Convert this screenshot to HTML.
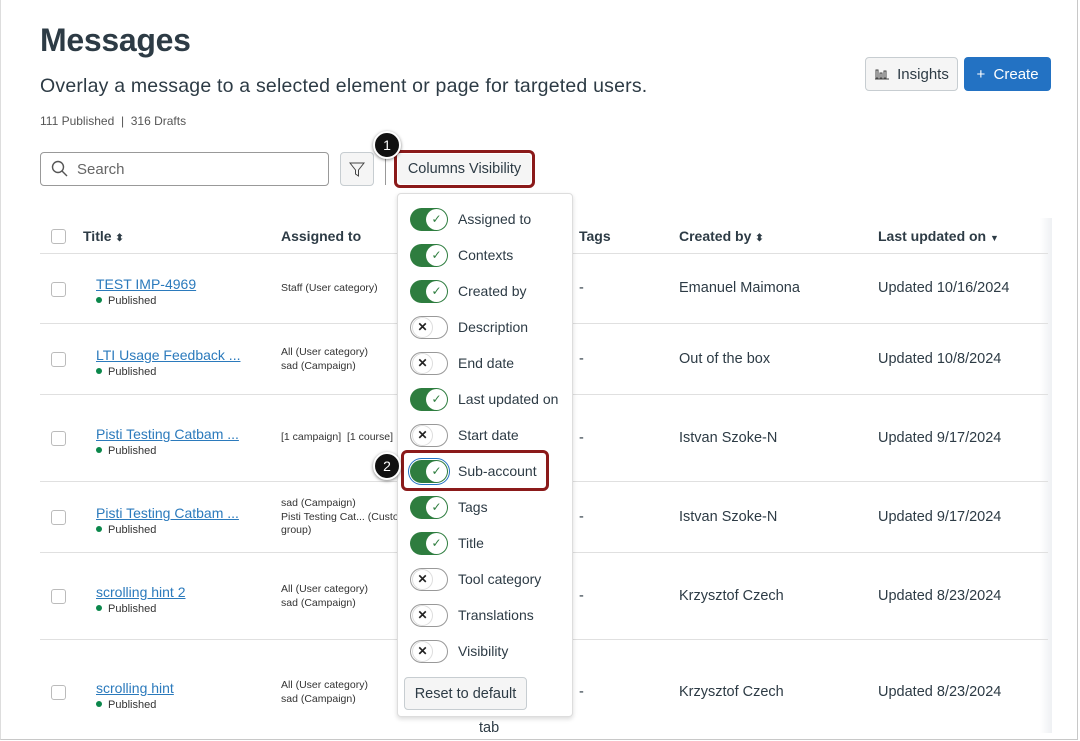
<!DOCTYPE html><html><head><style>
*{box-sizing:border-box;margin:0;padding:0}
body{width:1080px;height:741px;overflow:hidden;background:#fff;font-family:"Liberation Sans",sans-serif;color:#273540;position:relative}
.a{position:absolute}
.frame{left:0;top:0;width:1078px;height:740px;border:1px solid #c8c8c8;border-top:none;border-left:1px solid #ddd}
h1{position:absolute;left:40px;top:22px;font-size:32px;font-weight:bold;color:#2d3b45;letter-spacing:-0.3px}
.sub{left:40px;top:75px;font-size:19.5px;color:#2d3b45;letter-spacing:0.2px}
.cnt{left:40px;top:114px;font-size:12px;color:#555}
.btn{border:1px solid #c7cdd1;background:#f5f5f5;border-radius:4px;font-size:15px;color:#2d3b45;display:flex;align-items:center;justify-content:center}
.line{left:40px;width:1008px;height:1px;background:#e0e0e0}
.cb{left:51px;width:15px;height:15px;border:1px solid #bbb;border-radius:3px;background:#fff}
.lnk{left:96px;font-size:14px;color:#2b7abc;text-decoration:underline}
.pub{left:96px;font-size:11px;color:#333}
.pub:before{content:"";display:inline-block;width:6px;height:6px;border-radius:50%;background:#0b874b;margin-right:6px;vertical-align:1px}
.sm{left:281px;font-size:10.5px;line-height:13.5px;color:#333}
.t{font-size:14.5px;color:#2d3b45}
.hd{top:228px;font-size:14px;font-weight:bold;color:#2d3b45}
.dd{left:397px;top:193px;width:176px;height:524px;background:#fff;border:1px solid #ddd;border-radius:4px;box-shadow:0 2px 5px rgba(0,0,0,.15)}
.it{position:absolute;left:12px;height:24px;display:flex;align-items:center;font-size:14px;color:#2d3b45}
.tg{width:38px;height:23px;border-radius:12px;position:relative;margin-right:10px}
.on{background:#2e7d3f}
.off{background:#fff;border:1px solid #999}
.kn{position:absolute;top:1px;width:21px;height:21px;border-radius:50%;background:#fff;display:flex;align-items:center;justify-content:center;font-size:12px}
.on .kn{right:1px;color:#2e7d3f}
.off .kn{left:1px;top:0;border:1px solid #ddd;color:#222;font-weight:bold}
.badge{width:28px;height:28px;border-radius:50%;background:#111;color:#fff;border:2px solid #fff;box-shadow:0 1px 3px rgba(0,0,0,.5);font-size:14px;display:flex;align-items:center;justify-content:center}
.hl{border:3px solid #8b1a1a;border-radius:6px}
</style></head><body>
<div class="a frame"></div>
<h1>Messages</h1>
<div class="a sub">Overlay a message to a selected element or page for targeted users.</div>
<div class="a cnt">111 Published &nbsp;|&nbsp; 316 Drafts</div>
<div class="a btn" style="left:865px;top:57px;width:93px;height:34px"><svg width="16" height="12" style="margin-right:7px"><path d="M1 11h14M2 2h2v8H2zM6 5h2v5H6zM10 3h2v7h-2z" stroke="#444" fill="none"/></svg>Insights</div>
<div class="a" style="left:964px;top:57px;width:87px;height:34px;background:#2372c3;border-radius:4px;color:#fff;font-size:15px;display:flex;align-items:center;justify-content:center">+&nbsp; Create</div>
<div class="a" style="left:40px;top:152px;width:289px;height:34px;border:1px solid #999;border-radius:4px;font-size:15px;color:#666;padding:8px 0 0 36px">Search</div>
<svg class="a" style="left:51px;top:160px" width="18" height="18"><circle cx="7" cy="7" r="5.5" stroke="#555" stroke-width="1.4" fill="none"/><path d="M11 11l5 5" stroke="#555" stroke-width="1.4"/></svg>
<div class="a btn" style="left:340px;top:152px;width:34px;height:34px"><svg width="16" height="16"><path d="M1 2h14l-5.5 7v6l-3-2V9z" stroke="#444" fill="none"/></svg></div>
<div class="a" style="left:385px;top:155px;width:1px;height:30px;background:#999"></div>
<div class="a hl" style="left:394px;top:150px;width:141px;height:38px"></div>
<div class="a btn" style="left:398px;top:154px;width:133px;height:30px;border:none;font-size:14.5px">Columns Visibility</div>
<div class="a badge" style="left:373px;top:131px">1</div>
<div class="a cb" style="top:229px"></div>
<div class="a hd" style="left:83px">Title <span style="font-size:10px">&#x2B0D;</span></div>
<div class="a hd" style="left:281px">Assigned to</div>
<div class="a hd" style="left:579px">Tags</div>
<div class="a hd" style="left:679px">Created by <span style="font-size:10px">&#x2B0D;</span></div>
<div class="a hd" style="left:878px">Last updated on <span style="font-size:9px">&#x25BC;</span></div>
<div class="a" style="left:1040px;top:218px;width:12px;height:515px;background:linear-gradient(90deg,#fff,#eef0f3)"></div>
<div class="a line" style="top:253px"></div>
<div class="a line" style="top:323px"></div>
<div class="a line" style="top:394px"></div>
<div class="a line" style="top:481px"></div>
<div class="a line" style="top:552px"></div>
<div class="a line" style="top:639px"></div>

<div class="a cb" style="top:282px"></div><div class="a lnk" style="top:276px">TEST IMP-4969</div><div class="a pub" style="top:295px">Published</div><div class="a sm" style="top:282px">Staff (User category)</div><div class="a t" style="left:579px;top:280px">-</div><div class="a t" style="left:679px;top:280px">Emanuel Maimona</div><div class="a t" style="left:878px;top:280px">Updated 10/16/2024</div>
<div class="a cb" style="top:352px"></div><div class="a lnk" style="top:347px">LTI Usage Feedback ...</div><div class="a pub" style="top:366px">Published</div><div class="a sm" style="top:346px">All (User category)<br>sad (Campaign)</div><div class="a t" style="left:579px;top:351px">-</div><div class="a t" style="left:679px;top:351px">Out of the box</div><div class="a t" style="left:878px;top:351px">Updated 10/8/2024</div>
<div class="a cb" style="top:431px"></div><div class="a lnk" style="top:426px">Pisti Testing Catbam ...</div><div class="a pub" style="top:445px">Published</div><div class="a sm" style="top:431px">[1 campaign] &nbsp;[1 course]</div><div class="a t" style="left:579px;top:430px">-</div><div class="a t" style="left:679px;top:430px">Istvan Szoke-N</div><div class="a t" style="left:878px;top:430px">Updated 9/17/2024</div>
<div class="a cb" style="top:510px"></div><div class="a lnk" style="top:505px">Pisti Testing Catbam ...</div><div class="a pub" style="top:524px">Published</div><div class="a sm" style="top:497px">sad (Campaign)<br>Pisti Testing Cat... (Custom<br>group)</div><div class="a t" style="left:579px;top:509px">-</div><div class="a t" style="left:679px;top:509px">Istvan Szoke-N</div><div class="a t" style="left:878px;top:509px">Updated 9/17/2024</div>
<div class="a cb" style="top:589px"></div><div class="a lnk" style="top:584px">scrolling hint 2</div><div class="a pub" style="top:603px">Published</div><div class="a sm" style="top:583px">All (User category)<br>sad (Campaign)</div><div class="a t" style="left:579px;top:588px">-</div><div class="a t" style="left:679px;top:588px">Krzysztof Czech</div><div class="a t" style="left:878px;top:588px">Updated 8/23/2024</div>
<div class="a cb" style="top:685px"></div><div class="a lnk" style="top:680px">scrolling hint</div><div class="a pub" style="top:699px">Published</div><div class="a sm" style="top:679px">All (User category)<br>sad (Campaign)</div><div class="a t" style="left:579px;top:684px">-</div><div class="a t" style="left:679px;top:684px">Krzysztof Czech</div><div class="a t" style="left:878px;top:684px">Updated 8/23/2024</div>
<div class="a t" style="left:479px;top:720px">tab</div>

<div class="a dd">
<div class="it" style="top:13px"><div class="tg on"><div class="kn">✓</div></div>Assigned to</div>
<div class="it" style="top:49px"><div class="tg on"><div class="kn">✓</div></div>Contexts</div>
<div class="it" style="top:85px"><div class="tg on"><div class="kn">✓</div></div>Created by</div>
<div class="it" style="top:121px"><div class="tg off"><div class="kn">✕</div></div>Description</div>
<div class="it" style="top:157px"><div class="tg off"><div class="kn">✕</div></div>End date</div>
<div class="it" style="top:193px"><div class="tg on"><div class="kn">✓</div></div>Last updated on</div>
<div class="it" style="top:229px"><div class="tg off"><div class="kn">✕</div></div>Start date</div>
<div class="it" style="top:265px"><div class="tg on" style="outline:1.5px solid #2372c3;outline-offset:1px"><div class="kn">✓</div></div>Sub-account</div>
<div class="it" style="top:301px"><div class="tg on"><div class="kn">✓</div></div>Tags</div>
<div class="it" style="top:337px"><div class="tg on"><div class="kn">✓</div></div>Title</div>
<div class="it" style="top:373px"><div class="tg off"><div class="kn">✕</div></div>Tool category</div>
<div class="it" style="top:409px"><div class="tg off"><div class="kn">✕</div></div>Translations</div>
<div class="it" style="top:445px"><div class="tg off"><div class="kn">✕</div></div>Visibility</div>
<div class="a btn" style="left:6px;top:483px;width:123px;height:33px;font-size:14.5px">Reset to default</div>
</div>
<div class="a hl" style="left:401px;top:450px;width:148px;height:41px"></div>
<div class="a badge" style="left:373px;top:452px">2</div>
</body></html>
